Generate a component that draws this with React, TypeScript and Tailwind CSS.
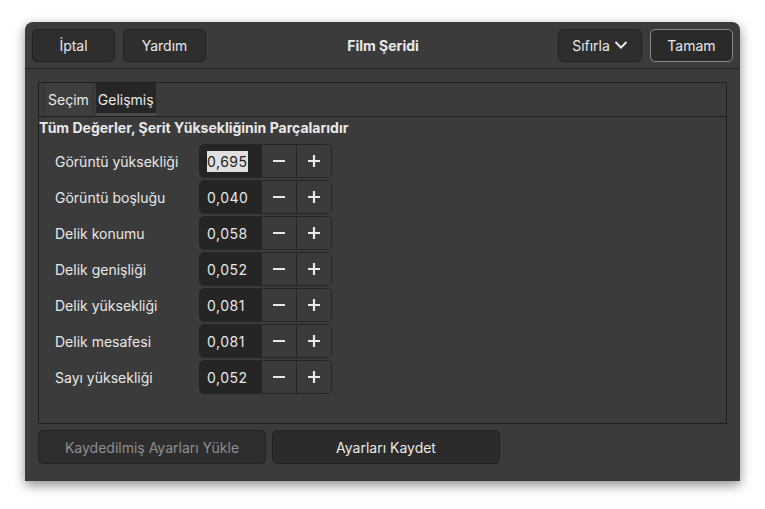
import React from "react";

const rows: [string, string][] = [
  ["Görüntü yüksekliği", "0,695"],
  ["Görüntü boşluğu", "0,040"],
  ["Delik konumu", "0,058"],
  ["Delik genişliği", "0,052"],
  ["Delik yüksekliği", "0,081"],
  ["Delik mesafesi", "0,081"],
  ["Sayı yüksekliği", "0,052"],
];

const Minus = () => (
  <svg width="14" height="14" viewBox="0 0 14 14"><path d="M1 7h12" stroke="#e8e8e8" strokeWidth="2.2" /></svg>
);
const Plus = () => (
  <svg width="14" height="14" viewBox="0 0 14 14"><path d="M1 7h12M7 1v12" stroke="#e8e8e8" strokeWidth="2.2" /></svg>
);

export default function App() {
  return (
    <div className="w-[765px] h-[509px] bg-white pt-[22px] pl-[25px]" style={{ fontFamily: "Inter, 'Noto Sans', sans-serif" }}>
      <div className="w-[715px] h-[459px] bg-[#3b3b3b] rounded-t-[8px] shadow-[0_4px_12px_rgba(0,0,0,0.45)] text-[#e8e8e8] text-[14px] flex flex-col">
        <div className="h-[47px] border-b border-[#262626] flex items-center px-[7px] gap-[8px]">
          <button className="w-[83px] h-[33px] rounded-[5px] bg-[#2e2e2e] border border-[#222]">İptal</button>
          <button className="w-[83px] h-[33px] rounded-[5px] bg-[#2e2e2e] border border-[#222]">Yardım</button>
          <div className="flex-1 text-center font-bold pl-[2px]">Film Şeridi</div>
          <button className="w-[84px] h-[33px] rounded-[5px] bg-[#2e2e2e] border border-[#222] flex items-center justify-center gap-[4px]">
            Sıfırla
            <svg width="14" height="10" viewBox="0 0 14 10"><path d="M1.5 2l5.5 5.5L12.5 2" stroke="#e8e8e8" strokeWidth="2" fill="none" /></svg>
          </button>
          <button className="w-[83px] h-[33px] rounded-[5px] bg-[#2a2a2a] border border-[#8a8a8a]">Tamam</button>
        </div>
        <div className="mx-[13px] mt-[13px] h-[342px] border border-[#202020] flex flex-col">
          <div className="h-[34px] border-b border-[#202020] flex items-stretch pl-[5px] gap-[3px]">
            <div className="px-[3px] flex items-center bg-[#3e3e3e] border-x border-[#333]">Seçim</div>
            <div className="px-[2px] flex items-center bg-[#262626] border-b-[3px] border-[#4a4a4a] pt-[3px]">Gelişmiş</div>
          </div>
          <div className="font-bold pt-[2px] leading-[18px]">Tüm Değerler, Şerit Yüksekliğinin Parçalarıdır</div>
          <div className="flex flex-col pt-[6px]">
            {rows.map(([l, v], i) => (
              <div key={l} className="h-[36px] flex items-center">
                <div className="w-[160px] pl-[16px]">{l}</div>
                <div className="flex h-[34px] border border-[#262626] rounded-[5px] overflow-hidden">
                  <div className="w-[62px] bg-[#252525] flex items-center px-[7px] tracking-[0.5px]">
                    <span className={i === 0 ? "bg-[#e0e0e0] text-[#222]" : ""}>{v}</span>
                  </div>
                  <div className="w-[35px] flex items-center justify-center border-r border-[#262626] bg-[#3b3b3b]"><Minus /></div>
                  <div className="w-[34px] flex items-center justify-center bg-[#3b3b3b]"><Plus /></div>
                </div>
              </div>
            ))}
          </div>
        </div>
        <div className="flex gap-[6px] mx-[13px] mt-[6px]">
          <button className="w-[228px] h-[34px] rounded-[5px] bg-[#2e2e2e] border border-[#232323] text-[#8f8f8f]">Kaydedilmiş Ayarları Yükle</button>
          <button className="w-[228px] h-[34px] rounded-[5px] bg-[#2b2b2b] border border-[#232323]">Ayarları Kaydet</button>
        </div>
      </div>
    </div>
  );
}
